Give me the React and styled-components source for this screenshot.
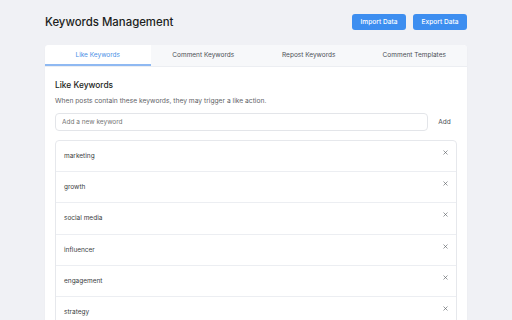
import React from 'react';
import styled, {createGlobalStyle} from 'styled-components';

const GlobalStyle = createGlobalStyle`
    body {
        margin: 0;
        background: #f0f1f5;
        font-family: 'Inter', 'Liberation Sans', sans-serif;
        color: #1f2328;
    }
`;

const Page = styled.div`
    width: 422px;
    margin: 0 auto;
    padding-top: 14px;
`;

const Header = styled.header`
    display: flex;
    align-items: center;
    justify-content: space-between;
    height: 16px;
    margin-bottom: 15px;
`;

const Title = styled.h1`
    margin: 0;
    font-size: 11.4px;
    font-weight: 500;
    color: #1c1e21;
`;

const Actions = styled.div`
    display: flex;
    gap: 7px;
`;

const Button = styled.button`
    height: 16px;
    width: 54px;
    border: none;
    border-radius: 3px;
    background: #3d8ef0;
    color: #fff;
    font-family: inherit;
    font-size: 6.6px;
    font-weight: 500;
    padding: 0;
`;

const Card = styled.main`
    background: #fff;
    border-radius: 4px;
    overflow: hidden;
    box-shadow: 0 1px 2px rgba(0, 0, 0, 0.04);
`;

const Tabs = styled.nav`
    display: grid;
    grid-template-columns: repeat(4, 1fr);
    background: #f7f8fa;
    border-bottom: 1px solid #eceef2;
`;

const Tab = styled.div`
    height: 19px;
    display: flex;
    align-items: center;
    justify-content: center;
    font-size: 6.5px;
    color: ${p => (p.$active ? '#4a8fe6' : '#4b4f56')};
    background: ${p => (p.$active ? '#fff' : 'transparent')};
    border-bottom: 2px solid ${p => (p.$active ? '#8fb9f2' : 'transparent')};
`;

const Body = styled.section`
    padding: 13px 10px 0;
`;

const Heading = styled.h2`
    margin: 0 0 7px;
    font-size: 8.4px;
    font-weight: 500;
    color: #1c1e21;
`;

const Hint = styled.p`
    margin: 0 0 8px;
    font-size: 6.7px;
    color: #5f6368;
`;

const AddRow = styled.div`
    display: flex;
    align-items: center;
    gap: 4px;
    margin-bottom: 9px;
`;

const Input = styled.input`
    flex: 1;
    height: 18px;
    box-sizing: border-box;
    border: 1px solid #e3e5e9;
    border-radius: 4px;
    padding: 0 6px;
    font-family: inherit;
    font-size: 6.5px;
    color: #333;
    outline: none;

    ::placeholder {
        color: #6b6f75;
    }
`;

const AddButton = styled.button`
    width: 25px;
    border: none;
    background: none;
    font-family: inherit;
    font-size: 6.5px;
    color: #4b4f56;
    padding: 0;
`;

const List = styled.ul`
    list-style: none;
    margin: 0;
    padding: 0;
    border: 1px solid #e6e8ec;
    border-radius: 4px;
`;

const Item = styled.li`
    height: 30.2px;
    display: flex;
    justify-content: space-between;
    padding: 0 8px;
    border-bottom: 1px solid #eceef2;
    font-size: 6.5px;
    color: #3a3d42;
`;

const Label = styled.span`
    align-self: center;
`;

const Remove = styled.button`
    margin-top: 9px;
    align-self: flex-start;
    border: none;
    background: none;
    padding: 0;
    line-height: 0;
    color: #5f6368;
`;

const tabs = ['Like Keywords', 'Comment Keywords', 'Repost Keywords', 'Comment Templates'];
const keywords = ['marketing', 'growth', 'social media', 'influencer', 'engagement', 'strategy', 'content'];

const Cross = () => (
    <svg width="5" height="5" viewBox="0 0 10 10">
        <path d="M1 1 L9 9 M9 1 L1 9" stroke="currentColor" strokeWidth="1.3" />
    </svg>
);

const App = () => (
    <>
        <GlobalStyle />
        <Page>
            <Header>
                <Title>Keywords Management</Title>
                <Actions>
                    <Button>Import Data</Button>
                    <Button>Export Data</Button>
                </Actions>
            </Header>
            <Card>
                <Tabs>
                    {tabs.map((t, i) => (
                        <Tab key={t} $active={i === 0}>{t}</Tab>
                    ))}
                </Tabs>
                <Body>
                    <Heading>Like Keywords</Heading>
                    <Hint>When posts contain these keywords, they may trigger a like action.</Hint>
                    <AddRow>
                        <Input placeholder="Add a new keyword" />
                        <AddButton>Add</AddButton>
                    </AddRow>
                    <List>
                        {keywords.map(k => (
                            <Item key={k}>
                                <Label>{k}</Label>
                                <Remove><Cross /></Remove>
                            </Item>
                        ))}
                    </List>
                </Body>
            </Card>
        </Page>
    </>
);

export default App;
